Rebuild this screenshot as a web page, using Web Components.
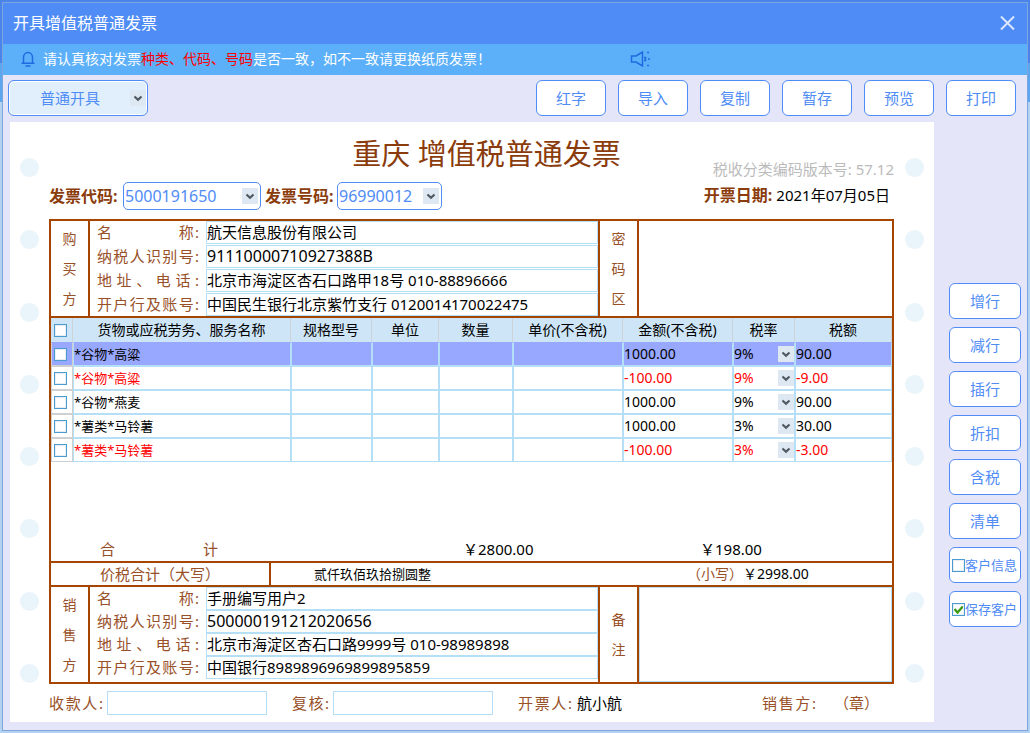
<!DOCTYPE html>
<html lang="zh-CN">
<head>
<meta charset="utf-8">
<meta name="viewport" content="width=device-width, initial-scale=1">
<title>开具增值税普通发票</title>
<style>
  :root {
    --blue: #4f8cf6;
    --brown: #a64500;
    --ink: #8b3c0c;
    --soft-ink: #985028;
    --line: #b5dff7;
    --dot: #e9f4fb;
    --arrow: url("data:image/svg+xml,%3Csvg xmlns='http://www.w3.org/2000/svg' width='16' height='16'%3E%3Crect width='16' height='16' fill='%23dde8f2'/%3E%3Cpath d='M4.5 6.5L8 9.7L11.5 6.5' fill='none' stroke='%23505860' stroke-width='2.2'/%3E%3C/svg%3E");
    --tick: url("data:image/svg+xml,%3Csvg xmlns='http://www.w3.org/2000/svg' width='11' height='11'%3E%3Cpath d='M1.5 5L4.5 8.5L9.8 2.5' fill='none' stroke='%233a9a10' stroke-width='2.4'/%3E%3C/svg%3E");
  }
  html { height: 100%; }
  body {
    margin: 0;
    min-height: 100%;
    box-sizing: border-box;
    padding: 3px;
    font: 15px/18px "Noto Sans", "Noto Sans CJK SC", sans-serif;
    color: #000;
    background: linear-gradient(#4a84ea 63px, #5ba6ef 63px, #5ba6ef 102px, #b4d2f0 102px);
  }
</style>
</head>
<body>
<app-window></app-window>

<template id="t-button">
  <style>
    :host { display: block; }
    button {
      width: 100%; height: 36px; padding: 0; box-sizing: border-box;
      border: 1px solid var(--blue); border-radius: 6px;
      background: #fff; color: var(--blue); font: inherit;
    }
  </style>
  <button type="button"><slot></slot></button>
</template>

<template id="t-check">
  <style>
    :host { display: block; }
    label {
      display: flex; align-items: center; height: 36px; box-sizing: border-box;
      padding-left: 2px; border: 1px solid var(--blue); border-radius: 6px;
      background: #fff; color: var(--blue); font-size: 13px; white-space: nowrap;
    }
    input {
      appearance: none; flex: none; width: 13px; height: 13px; margin: 0; box-sizing: border-box;
      border: 1px solid #4a9bcf; background: #fff center no-repeat;
      box-shadow: inset 0 0 0 1px #e8eef2;
    }
    input:checked { background-image: var(--tick); }
  </style>
  <label><input type="checkbox"><slot></slot></label>
</template>

<template id="t-select">
  <style>
    :host { display: flex; align-items: center; }
    label { flex: none; font-size: 16px; font-weight: 700; color: var(--ink); }
    label:empty { display: none; }
    select {
      appearance: none; flex: 1; min-width: 0; width: 100%; height: 28px; box-sizing: border-box;
      padding: 0 20px 0 1px; margin: 0; outline: none;
      border: 1px solid var(--blue); border-radius: 5px;
      background: #fff var(--arrow) right 2px center no-repeat;
      color: var(--blue); font: inherit; font-size: 16px;
    }
    :host([mode]) select {
      height: 36px; padding-left: 31px; font-size: 15px; border-radius: 6px;
      background-color: #e0effb; background-position: right 1px center;
      box-shadow: inset 0 0 0 1px #fff;
    }
  </style>
  <label for="s"></label><select id="s"></select>
</template>

<template id="t-notice">
  <style>
    :host {
      display: flex; align-items: center; height: 31px; box-sizing: border-box; padding: 0 0 2px 18px;
      background: #5cb0fa; color: #fff; font-size: 14px;
    }
    svg { flex: none; fill: none; stroke: #1c6be0; stroke-width: 1.5; }
    p { margin: 0 0 0 8px; width: 587px; }
  </style>
  <svg width="14" height="16" viewBox="0 0 14 16"><path d="M2.5 12V6.5A4.500 5 0 0 1 11.500 6.500V12M.5 12.300H13.500M4.500 15H9.500"/></svg>
  <p><slot></slot></p>
  <svg width="21" height="16" viewBox="0 0 21 16"><path d="M1.500 5H6L12.500 1V15L6 11H1.500ZM14 6.500H15.500V9.500H14"/><path d="M17 1.500H19M18 8H20M17 14.500H19"/></svg>
</template>

<template id="t-dots">
  <style>
    :host { display: flex; flex-direction: column; justify-content: space-between; }
    i { width: 19px; height: 19px; border-radius: 50%; background: var(--dot); }
  </style>
  <i></i><i></i><i></i><i></i><i></i><i></i><i></i><i></i>
</template>

<template id="t-party">
  <style>
    :host {
      display: grid; height: 95px;
      grid-template-columns: 37px minmax(0, 510fr) 39px minmax(0, 255fr);
    }
    .side {
      display: flex; flex-direction: column; justify-content: center; align-items: center;
      font-size: 14px; line-height: 30px; color: var(--soft-ink);
    }
    .side + *, .rows + * { border-left: 2px solid var(--brown); }
    .rows { display: flex; flex-direction: column; gap: 1px; }
    .row { display: grid; grid-template-columns: 102px minmax(0, 1fr); column-gap: 7px; padding-left: 7px; }
    label { align-self: center; padding-bottom: 2px; color: var(--soft-ink); text-align-last: justify; white-space: nowrap; }
    input, textarea {
      width: 100%; box-sizing: border-box; height: 23px; margin: 0; padding: 0 0 2px;
      border: 1px solid var(--line); background: #fff; color: #000; font: inherit; outline: none;
    }
    input.code { font-size: 16px; }
    :host([role-name="seller"]) .rows { gap: 0; }
    .area { border-left: 2px solid var(--brown); }
    textarea { display: block; height: 95px; resize: none; }
  </style>
  <div class="side head"></div>
  <div class="rows"></div>
  <div class="side tail"></div>
  <div class="area"></div>
</template>

<template id="t-items">
  <style>
    :host { display: block; }
    table { width: 100%; table-layout: fixed; border-collapse: separate; border-spacing: 0; }
    th, td { box-sizing: border-box; height: 24px; padding: 0; overflow: hidden; white-space: nowrap; }
    th { background: #cde5f6; font-size: 14px; font-weight: 400; border-right: 1px solid #ccd3d8; }
    td { border: 1px solid var(--line); font-size: 14px; line-height: 18px; text-align: left; }
    td.name { font-size: 13px; }
    .pick { padding-left: 3px; text-align: left; }
    td.pick { padding-left: 2px; border-color: #d0d0d0; }
    tr.neg, tr.neg select { color: #f00; }
    tr.on td { background: #99a8ff; border-top-color: #99a8ff; }
    input {
      appearance: none; display: block; width: 13px; height: 13px; margin: 0; box-sizing: border-box;
      border: 1px solid #4a9bcf; background: #fff; box-shadow: inset 0 0 0 1px #e8eef2;
    }
    select {
      appearance: none; display: block; width: 100%; height: 20px; padding: 0; margin: 0;
      border: 0; outline: none; font: inherit; color: #000;
      background: var(--arrow) right center no-repeat;
    }
  </style>
  <table>
    <colgroup>
      <col style="width:22px"><col style="width:218px"><col style="width:81px"><col style="width:67px"><col style="width:74px">
      <col style="width:110px"><col style="width:110px"><col style="width:62px"><col style="width:97px">
    </colgroup>
    <thead><tr>
      <th class="pick"><input type="checkbox" aria-label="全选"></th>
      <th>货物或应税劳务、服务名称</th><th>规格型号</th><th>单位</th><th>数量</th>
      <th>单价(不含税)</th><th>金额(不含税)</th><th>税率</th><th>税额</th>
    </tr></thead>
    <tbody></tbody>
  </table>
</template>

<template id="t-sheet">
  <style>
    :host {
      display: grid; grid-template-columns: 19px minmax(0, 1fr) 19px; column-gap: 10px;
      padding: 0 10px; background: #fff;
    }
    paper-dots { padding: 36px 0 39px; }
    .paper { padding: 14px 1px 7px 0; }
    .top { display: grid; grid-template-columns: minmax(0, 1fr) auto minmax(0, 1fr); height: 42px; padding-left: 30px; }
    h1 {
      grid-column: 2; margin: 0; font-size: 29px; line-height: 36px; font-weight: 400;
      color: var(--ink); white-space: nowrap;
    }
    .ver { align-self: end; justify-self: end; color: #bbb; white-space: nowrap; }
    .codes { display: flex; align-items: center; gap: 4px; margin: 4px 0 9px; }
    .code { width: 212px; }
    .num { width: 177px; }
    .date { display: flex; gap: 4px; margin-left: auto; padding: 0 4px 2px 0; white-space: nowrap; }
    .date b { font-size: 16px; color: var(--ink); }
    .frame { border: 2px solid var(--brown); }
    .body {
      display: flex; flex-direction: column; justify-content: space-between;
      min-height: 243px; border: solid var(--brown); border-width: 2px 0;
    }
    .sum { display: grid; grid-template-columns: 363fr 237fr 192fr; align-items: center; height: 24px; padding-left: 49px; }
    .k { color: var(--soft-ink); }
    .wide { display: block; width: 118px; text-align-last: justify; }
    .total {
      display: grid; grid-template-columns: 218fr 418fr 205fr; height: 22px; line-height: 22px;
      border-bottom: 2px solid var(--brown);
    }
    .total .pad { padding-left: 49px; }
    .total .cn { padding-left: 43px; border-left: 2px solid var(--brown); font-size: 13px; }
    .total .fig { font-size: 14px; }
    .foot { display: flex; align-items: center; margin-top: 7px; white-space: nowrap; }
    .foot .k { flex: none; text-align-last: justify; }
    .foot input {
      flex: 0 1 160px; min-width: 0; height: 24px; box-sizing: border-box; margin: 0 25px 0 4px; padding: 0 2px;
      border: 1px solid var(--line); font: inherit; outline: none;
    }
    .three { width: 54px; }
    .two { width: 37px; }
    .name { margin-left: 5px; }
    .seal { margin: 0 15px 0 auto; display: flex; gap: 18px; }
  </style>
  <paper-dots></paper-dots>
  <div class="paper">
    <div class="top"><h1>重庆 增值税普通发票</h1><span class="ver">税收分类编码版本号: 57.12</span></div>
    <div class="codes">
      <ui-select class="code" label="发票代码:" value="5000191650"></ui-select>
      <ui-select class="num" label="发票号码:" value="96990012"></ui-select>
      <span class="date"><b>开票日期:</b> <time datetime="2021-07-05">2021年07月05日</time></span>
    </div>
    <div class="frame">
      <party-block head="购买方" tail="密码区" role-name="buyer"></party-block>
      <div class="body">
        <item-table></item-table>
        <div class="sum"><span class="k wide">合 计</span><span>￥2800.00</span><span>￥198.00</span></div>
      </div>
      <div class="total">
        <span class="k pad">价税合计（大写）</span>
        <span class="cn">贰仟玖佰玖拾捌圆整</span>
        <span class="fig"><span class="k">（小写）</span>￥2998.00</span>
      </div>
      <party-block head="销售方" tail="备注" role-name="seller"></party-block>
    </div>
    <div class="foot">
      <label class="k three" for="payee">收款人:</label><input id="payee">
      <label class="k two" for="review">复核:</label><input id="review">
      <span class="k three">开票人:</span><span class="name">航小航</span>
      <span class="k seal"><span class="three">销售方:</span><span>（章）</span></span>
    </div>
  </div>
  <paper-dots></paper-dots>
</template>

<template id="t-window">
  <style>
    :host { display: block; background: #e5e5fa; box-shadow: 0 0 0 1px #7ea6de; }
    header {
      display: flex; align-items: center; justify-content: space-between; height: 41px; box-sizing: border-box;
      padding: 0 12px 2px 10px; background: #4f8cf6; color: #fff; font-size: 16px;
    }
    h2 { margin: 0; font-size: 16px; font-weight: 400; }
    .close { display: block; padding: 0; border: 0; background: none; }
    .close svg { display: block; stroke: #dbe8ff; stroke-width: 2; }
    em { font-style: normal; color: #f00; }
    .tools { display: flex; gap: 12px; padding: 5px 11px 6px 5px; }
    .tools ui-select { width: 140px; margin-right: auto; }
    .tools ui-button { width: 70px; }
    main { display: grid; grid-template-columns: minmax(0, 1fr) 72px; column-gap: 15px; padding: 0 6px 8px 7px; }
    nav { display: flex; flex-direction: column; gap: 8px; padding-top: 161px; }
  </style>
  <header>
    <h2>开具增值税普通发票</h2>
    <button class="close" type="button" aria-label="关闭"><svg width="15" height="14" viewBox="0 0 15 14"><path d="M1 .5L14 13.500M14 .5L1 13.500"/></svg></button>
  </header>
  <notice-bar>请认真核对发票<em>种类、代码、号码</em>是否一致，如不一致请更换纸质发票！</notice-bar>
  <div class="tools">
    <ui-select mode value="普通开具"></ui-select>
    <ui-button>红字</ui-button><ui-button>导入</ui-button><ui-button>复制</ui-button>
    <ui-button>暂存</ui-button><ui-button>预览</ui-button><ui-button>打印</ui-button>
  </div>
  <main>
    <invoice-sheet></invoice-sheet>
    <nav>
      <ui-button>增行</ui-button><ui-button>减行</ui-button><ui-button>插行</ui-button>
      <ui-button>折扣</ui-button><ui-button>含税</ui-button><ui-button>清单</ui-button>
      <ui-check>客户信息</ui-check><ui-check checked>保存客户</ui-check>
    </nav>
  </main>
</template>

<script>
  class Base extends HTMLElement {
    constructor() {
      super();
      this.attachShadow({ mode: 'open' })
        .append(document.getElementById(this.constructor.template).content.cloneNode(true));
    }
    $(selector) { return this.shadowRoot.querySelector(selector); }
  }
  const define = (name, template, Type = class extends Base {}) => {
    Type.template = template;
    customElements.define(name, Type);
  };

  define('ui-button', 't-button');
  define('notice-bar', 't-notice');
  define('paper-dots', 't-dots');

  define('ui-check', 't-check', class extends Base {
    connectedCallback() { this.$('input').checked = this.hasAttribute('checked'); }
  });

  define('ui-select', 't-select', class extends Base {
    connectedCallback() {
      const label = this.getAttribute('label');
      const select = this.$('select');
      if (label) {
        this.$('label').textContent = label;
        this.$('label').style.width = label.includes('代码') ? '74px' : '72px';
      } else {
        select.setAttribute('aria-label', '开具方式');
      }
      select.replaceChildren(new Option(this.getAttribute('value')));
    }
  });

  const parties = {
    buyer: ['航天信息股份有限公司', '91110000710927388B', '北京市海淀区杏石口路甲18号 010-88896666', '中国民生银行北京紫竹支行 0120014170022475'],
    seller: ['手册编写用户2', '500000191212020656', '北京市海淀区杏石口路9999号 010-98989898', '中国银行8989896969899895859'],
  };
  const partyLabels = ['名　　　　称:', '纳税人识别号:', '地址、电话:', '开户行及账号:'];

  define('party-block', 't-party', class extends Base {
    connectedCallback() {
      const role = this.getAttribute('role-name');
      for (const part of ['head', 'tail']) {
        this.$('.' + part).innerHTML = [...this.getAttribute(part)].map(c => `<span>${c}</span>`).join('');
      }
      this.$('.rows').innerHTML = parties[role].map((value, i) =>
        `<div class="row"><label for="f${i}">${partyLabels[i]}</label><input id="f${i}" class="${i === 1 ? 'code' : ''}" value="${value}"></div>`).join('');
      if (role === 'seller') this.$('.area').innerHTML = '<textarea aria-label="备注"></textarea>';
    }
  });

  const items = [
    ['*谷物*高粱', '1000.00', '9%', '90.00'],
    ['*谷物*高粱', '-100.00', '9%', '-9.00'],
    ['*谷物*燕麦', '1000.00', '9%', '90.00'],
    ['*薯类*马铃薯', '1000.00', '3%', '30.00'],
    ['*薯类*马铃薯', '-100.00', '3%', '-3.00'],
  ];
  define('item-table', 't-items', class extends Base {
    connectedCallback() {
      this.$('tbody').innerHTML = items.map(([name, sum, rate, tax], i) => `
        <tr class="${i === 0 ? 'on' : ''} ${sum[0] === '-' ? 'neg' : ''}">
          <td class="pick"><input type="checkbox" aria-label="选择第${i + 1}行"></td>
          <td class="name">${name}</td><td></td><td></td><td></td><td></td>
          <td>${sum}</td>
          <td><select aria-label="税率"><option>${rate}</option></select></td>
          <td>${tax}</td>
        </tr>`).join('');
    }
  });

  define('invoice-sheet', 't-sheet');
  define('app-window', 't-window');
</script>
</body>
</html>
